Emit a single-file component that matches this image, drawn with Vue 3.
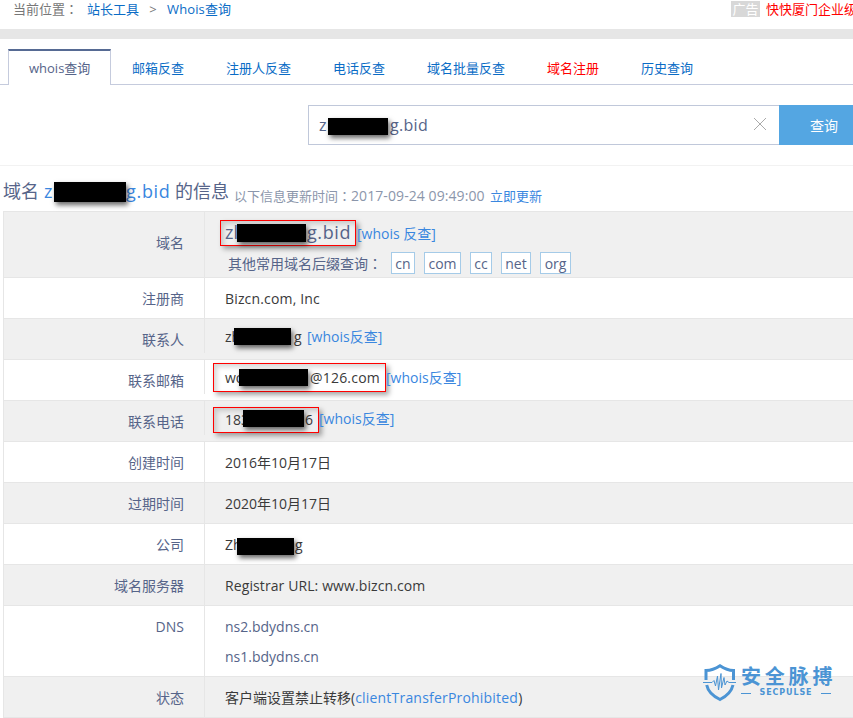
<template>
  <div class="page">
    <div class="crumbs">
      <span class="crumb-label">当前位置<span class="colon">：</span></span>
      <a class="crumb-link">站长工具</a>
      <span class="crumb-sep">&gt;</span>
      <a class="crumb-link wide">Whois查询</a>
      <span class="ad">
        <i class="ad-tag">广告</i>
        <a class="ad-link">快快厦门企业级</a>
      </span>
    </div>

    <nav class="tabs">
      <a
        v-for="tab in tabs"
        :key="tab.name"
        class="tab"
        :class="{ active: tab.active, hot: tab.hot }"
      >{{ tab.name }}</a>
      <span class="tabs-rest"></span>
    </nav>

    <div class="search">
      <div class="search-input">
        <span class="pre">z</span><span class="mask"></span><span class="post">g.bid</span>
        <svg class="clear" width="14" height="14" viewBox="0 0 14 14">
          <path d="M1 1L13 13M13 1L1 13" fill="none" stroke="#aaa" stroke-width="1" />
        </svg>
      </div>
      <button type="button" class="search-btn">查询</button>
    </div>

    <div class="heading">
      <span class="heading-text">域名</span>
      <span class="heading-domain"><span class="pre">z</span><span class="mask"></span><span class="post">g.bid</span></span>
      <span class="heading-text info">的信息</span>
      <span class="updated">以下信息更新时间<span class="colon">：</span><span class="stamp">2017-09-24 09:49:00</span></span>
      <a class="refresh">立即更新</a>
    </div>

    <div class="whois">
      <div class="row domain odd">
        <div class="label">域名</div>
        <div class="value">
          <div class="domain-line">
            <span class="mark"><span class="pre">zl</span><span class="mask"></span><span class="post">g.bid</span></span>
            <a class="link">[whois 反查]</a>
          </div>
          <div class="suffixes">
            <span class="suffix-title">其他常用域名后缀查询<span class="colon">：</span></span>
            <a v-for="s in suffixes" :key="s" class="suffix" :class="s">{{ s }}</a>
          </div>
        </div>
      </div>

      <div class="row">
        <div class="label">注册商</div>
        <div class="value"><span class="registrar">Bizcn.com, Inc</span></div>
      </div>

      <div
        v-for="c in contacts"
        :key="c.key"
        class="row contact"
        :class="[c.key, { odd: c.odd }]"
      >
        <div class="label">{{ c.label }}</div>
        <div class="value">
          <span :class="{ mark: c.marked }" class="masked"><span class="pre">{{ c.pre }}</span><span class="mask"></span><span class="post">{{ c.post }}</span></span>
          <a class="link">[whois反查]</a>
        </div>
      </div>

      <div class="row">
        <div class="label">创建时间</div>
        <div class="value date">2016年10月17日</div>
      </div>
      <div class="row odd">
        <div class="label">过期时间</div>
        <div class="value date">2020年10月17日</div>
      </div>
      <div class="row company">
        <div class="label">公司</div>
        <div class="value"><span class="pre">Zh</span><span class="mask"></span><span class="post">g</span></div>
      </div>
      <div class="row odd">
        <div class="label">域名服务器</div>
        <div class="value"><span class="server">Registrar URL: www.bizcn.com</span></div>
      </div>
      <div class="row dns">
        <div class="label">DNS</div>
        <div class="value">
          <span>ns2.bdydns.cn</span>
          <span>ns1.bdydns.cn</span>
        </div>
      </div>
      <div class="row odd">
        <div class="label">状态</div>
        <div class="value">客户端设置禁止转移(<a class="status">clientTransferProhibited</a>)</div>
      </div>
    </div>

    <!-- Watermark over the table corner -->
    <div class="watermark">
      <svg class="shield" width="34" height="40" viewBox="0 0 34 40">
        <path
          d="M3 17V7.500Q10 7.500 17 2.800Q24 7.500 30.500 7.500V17M30 22Q28 31 17 36.500Q5.500 31 3.700 22"
          fill="none"
          stroke="#4b94d4"
          stroke-width="3"
        />
        <path
          d="M0 19.500H9L11 17.500L12.500 23L14.500 13L15.500 27L18 10.500L18.500 25L21 14.500L22 22L24 18L26 19.500H33"
          fill="none"
          stroke="#4b94d4"
          stroke-width="1"
          stroke-linejoin="round"
        />
      </svg>
      <div class="brand">
        <div class="brand-cn">安全脉搏</div>
        <div class="brand-en"><i></i><span>SECPULSE</span><i></i></div>
      </div>
    </div>
  </div>
</template>

<script setup>
const tabs = [
  { name: 'whois查询', active: true },
  { name: '邮箱反查' },
  { name: '注册人反查' },
  { name: '电话反查' },
  { name: '域名批量反查' },
  { name: '域名注册', hot: true },
  { name: '历史查询' }
]

const suffixes = ['cn', 'com', 'cc', 'net', 'org']

const contacts = [
  { key: 'person', label: '联系人', pre: 'zh', post: 'g', odd: true },
  { key: 'email', label: '联系邮箱', pre: 'wo', post: '@126.com', marked: true },
  { key: 'phone', label: '联系电话', pre: '183', post: '6', odd: true, marked: true }
]
</script>

<style>
body {
  margin: 0;
  background: #fff;
}
</style>

<style scoped>
.page {
  position: relative;
  width: 853px;
  height: 718px;
  overflow: hidden;
  font-family: 'Open Sans', 'Noto Sans CJK SC', sans-serif;
  font-size: 14px;
  color: #3a3a3a;
  white-space: nowrap;
}

/* full-width colon centred in its cell */
.colon {
  font-family: 'Noto Sans CJK TC', sans-serif;
  line-height: 1;
}

.crumbs {
  display: flex;
  height: 29px;
  padding-left: 13px;
  border-bottom: 10px solid #e6e6e6;
  font-size: 13px;
  line-height: 18px;
  color: #777;
}

.crumb-label {
  width: 74px;
}

.crumb-link {
  color: #0a6cc6;
}

.crumb-link.wide {
  letter-spacing: 0.12px;
}

.crumb-sep {
  width: 28px;
  text-align: center;
}

.ad {
  display: flex;
  margin-left: auto;
  width: 122px;
}

.ad-tag {
  flex: none;
  width: 29px;
  height: 16px;
  margin: 1px 6px 0 0;
  background: #d8d8d8;
  color: #fff;
  font-style: normal;
  line-height: 16px;
  text-align: center;
}

.ad-link {
  color: #f00;
}

.tabs {
  display: flex;
  height: 36px;
  margin-top: 10px;
  padding-left: 8px;
  background: linear-gradient(#c5cbdd, #c5cbdd) left bottom / 8px 1px no-repeat;
  font-size: 13px;
}

.tab {
  box-sizing: border-box;
  height: 36px;
  padding: 2px 21px 0;
  border-bottom: 1px solid #c5cbdd;
  line-height: 34px;
  color: #0a6cc6;
}

.tab.active {
  width: 103px;
  padding: 0 20px;
  border: 1px solid #c5cbdd;
  border-top: 2px solid #566a93;
  border-bottom: 0;
  color: #566489;
}

.tab.hot {
  color: #f00;
}

.tabs-rest {
  flex: 1;
  border-bottom: 1px solid #c5cbdd;
}

.search {
  display: flex;
  height: 60px;
  padding: 20px 0 0 308px;
  border-bottom: 1px solid #f2f2f2;
}

.search-input {
  display: flex;
  align-items: center;
  box-sizing: border-box;
  width: 471px;
  height: 40px;
  padding-left: 10px;
  border: 1px solid #c0c8da;
  border-right: 0;
  font-size: 16px;
  color: #566489;
}

.search-input .pre {
  width: 9px;
}

.search-input .mask {
  width: 60px;
  height: 17px;
  margin-top: 3px;
}

.search-input .post {
  margin-left: 2px;
  letter-spacing: 0.3px;
}

.clear {
  margin: 0 12px 2px auto;
}

.search-btn {
  width: 74px;
  height: 40px;
  padding: 0 0 0 16px;
  border: 0;
  background: #54a6e2;
  color: #fff;
  font: inherit;
}

.mask {
  position: relative;
  flex: none;
  background: #000;
  box-shadow: 2px 3px 5px rgba(0, 0, 0, 0.6);
}

.pre {
  flex: none;
}

.heading {
  display: flex;
  height: 45px;
  padding-left: 3px;
  font-size: 18px;
  line-height: 50px;
  color: #566489;
}

.heading-text {
  width: 41px;
}

.heading-text.info {
  width: 59px;
}

.heading-domain {
  display: flex;
  width: 131px;
  color: #3a87df;
}

.heading-domain .pre {
  width: 10px;
}

.heading-domain .mask {
  width: 72px;
  height: 20px;
  margin-top: 16px;
}

.heading-domain .post {
  letter-spacing: 0.7px;
}

.updated {
  width: 256px;
  font-size: 13px;
  line-height: 60px;
  color: #8b96ab;
}

.stamp {
  font-size: 14px;
  letter-spacing: 0.08px;
}

.refresh {
  font-size: 13px;
  line-height: 60px;
  color: #3a87df;
}

.whois {
  margin-left: 3px;
  border-top: 1px solid #e6e6e6;
  border-left: 1px solid #e6e6e6;
}

.row {
  display: flex;
  box-sizing: border-box;
  height: 41px;
  border-bottom: 1px solid #e6e6e6;
  line-height: 42px;
}

.row.odd {
  background: #f0f0f0;
}

.label {
  box-sizing: border-box;
  width: 200px;
  padding-right: 20px;
  text-align: right;
  color: #566489;
}

.value {
  display: flex;
  flex: 1;
  padding-left: 20px;
  border-left: 1px solid #e6e6e6;
}

.link,
.status {
  color: #3a87df;
}

.status {
  letter-spacing: 0.2px;
}

.registrar {
  letter-spacing: 0.16px;
}

.server {
  letter-spacing: 0.1px;
}

.domain {
  height: 66px;
}

.domain .label {
  line-height: 62px;
}

.domain .value {
  display: block;
}

.domain-line {
  display: flex;
  height: 41px;
}

.domain-line .link {
  margin-left: 1px;
  line-height: 43px;
}

.mark {
  box-sizing: border-box;
  border: 1px solid #f00;
  box-shadow: 3px 3px 5px rgba(0, 0, 0, 0.35), inset 3px 3px 5px rgba(0, 0, 0, 0.16);
}

.domain .mark {
  display: flex;
  width: 136px;
  height: 26px;
  margin: 8px 0 0 -5px;
  padding-left: 4px;
  font-size: 18px;
  line-height: 23px;
  color: #566489;
}

.domain .pre {
  width: 12px;
}

.domain .mask {
  width: 69px;
  height: 18px;
  margin-top: 3px;
}

.domain .post {
  margin-left: 1px;
  letter-spacing: 0.6px;
}

.suffixes {
  display: flex;
  height: 22px;
  margin: -1px 0 0 3px;
  line-height: 24px;
  color: #566489;
}

.suffix-title {
  width: 163px;
}

.suffix {
  box-sizing: border-box;
  width: 24px;
  margin-right: 9px;
  border: 1px solid #a5cbe8;
  background: #fff;
  line-height: 22px;
  text-align: center;
}

.suffix.com {
  width: 37px;
}

.suffix.cc {
  width: 22px;
}

.suffix.net {
  width: 30px;
}

.suffix.org {
  width: 31px;
}

.contact .value {
  height: 34px;
  line-height: 36px;
}

.contact .label {
  line-height: 42px;
}

.masked {
  display: flex;
}

.person .masked {
  width: 82px;
}

.person .pre {
  width: 9px;
}

.person .mask {
  width: 57px;
  height: 17px;
  margin: 9px 3px 0 0;
}

.email .mark {
  width: 173px;
  height: 29px;
  margin: 3px 0 0 -12px;
  padding-left: 11px;
  line-height: 28px;
}

.email .pre {
  width: 14px;
}

.email .mask {
  width: 69px;
  height: 17px;
  margin: 5px 2px 0 0;
}

.email .post {
  letter-spacing: 0.2px;
}

.phone .mark {
  width: 106px;
  height: 26px;
  margin: 6px 0 0 -12px;
  padding-left: 11px;
  line-height: 23px;
}

.phone .pre {
  width: 18px;
}

.phone .mask {
  width: 61px;
  height: 17px;
  margin: 2px 1px 0 0;
}

.company .pre {
  width: 12px;
}

.company .mask {
  width: 57px;
  height: 17px;
  margin: 14px 1px 0 0;
}

.dns {
  height: 71px;
}

.dns .value {
  flex-direction: column;
  color: #566489;
}

.dns .value span {
  height: 30px;
}

.watermark {
  position: absolute;
  left: 703px;
  top: 663px;
  display: flex;
  color: #4b94d4;
}

.brand {
  margin-left: 4px;
}

.brand-cn {
  height: 24px;
  font-size: 20px;
  font-weight: 700;
  line-height: 28px;
  letter-spacing: 3.8px;
}

.brand-en {
  display: flex;
  align-items: center;
  width: 90px;
  height: 12px;
  justify-content: space-between;
  font-family: 'DejaVu Sans', sans-serif;
  font-size: 8px;
  font-weight: 700;
  line-height: 12px;
  letter-spacing: 0.9px;
}

.brand-en i {
  width: 10px;
  height: 1px;
  background: #4b94d4;
}
</style>
